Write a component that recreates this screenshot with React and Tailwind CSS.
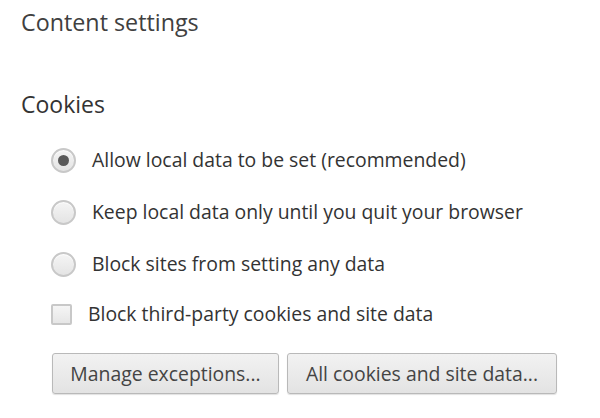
import React from "react";

const font = { fontFamily: '"Segoe UI", "Open Sans", "Noto Sans", sans-serif' };

function Radio({ checked }) {
  return (
    <span className="flex h-[25px] w-[25px] shrink-0 items-center justify-center rounded-full border-2 border-[#c8c8c8] bg-gradient-to-b from-[#f5f5f5] to-[#e4e4e4] shadow-[inset_0_1px_1px_rgba(255,255,255,0.9)]">
      {checked && <span className="h-[11px] w-[11px] rounded-full bg-[#5a5a5a]" />}
    </span>
  );
}

function RadioRow({ checked, children }) {
  return (
    <div className="flex h-[26px] items-center">
      <Radio checked={checked} />
      <span className="ml-[16px] text-[19.4px] leading-[26px] text-[#333]">{children}</span>
    </div>
  );
}

function Button({ children, w }) {
  return (
    <button className={`flex h-[41px] items-center justify-center rounded-[3px] border border-[#b9b9b9] bg-gradient-to-b from-[#f2f2f2] to-[#e3e3e3] text-[19.4px] text-[#444] shadow-[0_1px_1px_rgba(0,0,0,0.12)] ${w}`}>
      {children}
    </button>
  );
}

export default function App() {
  return (
    <div className="h-[418px] w-[600px] overflow-hidden bg-white pl-[21px] pt-[5px]" style={font}>
      <div className="text-[23.3px] leading-[34px] text-[#404040]">Content settings</div>
      <div className="mt-[49px] text-[23px] leading-[32px] text-[#333]">Cookies</div>
      <div className="ml-[30px] mt-[27px] flex flex-col gap-[26px]">
        <RadioRow checked>Allow local data to be set (recommended)</RadioRow>
        <RadioRow>Keep local data only until you quit your browser</RadioRow>
        <RadioRow>Block sites from setting any data</RadioRow>
      </div>
      <div className="ml-[30px] mt-[26px] flex h-[22px] items-center">
        <span className="h-[21px] w-[21px] shrink-0 rounded-[2px] border-2 border-[#c8c8c8] bg-gradient-to-b from-[#f5f5f5] to-[#e6e6e6]" />
        <span className="ml-[16px] text-[19.4px] leading-[26px] text-[#333]">Block third-party cookies and site data</span>
      </div>
      <div className="ml-[31px] mt-[28px] flex gap-[8px]">
        <Button w="w-[227px]">Manage exceptions...</Button>
        <Button w="w-[270px]">All cookies and site data...</Button>
      </div>
    </div>
  );
}
